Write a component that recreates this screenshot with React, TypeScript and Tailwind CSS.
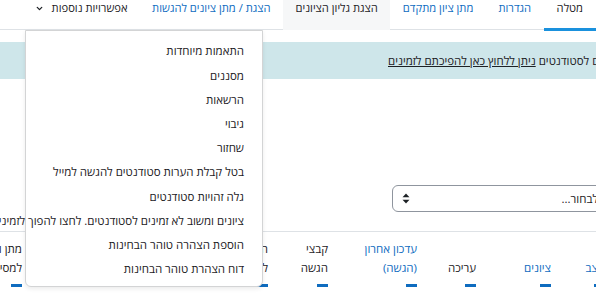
import React from "react";
import { ChevronDown } from "lucide-react";

const tabs = [
  { label: "מטלה", active: true, link: false },
  { label: "הגדרות", link: true },
  { label: "מתן ציון מתקדם", link: true },
  { label: "הצגת גליון הציונים", link: false, shaded: true },
  { label: "הצגת / מתן ציונים להגשות", link: true },
];

const menuItems = [
  "התאמות מיוחדות",
  "מסננים",
  "הרשאות",
  "גיבוי",
  "שחזור",
  "בטל קבלת הערות סטודנטים להגשה למייל",
  "גלה זהויות סטודנטים",
  "ציונים ומשוב לא זמינים לסטודנטים. לחצו להפוך לזמינים",
  "הוספת הצהרה טוהר הבחינות",
  "דוח הצהרת טוהר הבחינות",
];

const columns = [
  { w: 54, top: "", bottom: "מצב", link: true },
  { w: 75, top: "", bottom: "ציונים", link: true },
  { w: 59, top: "", bottom: "עריכה", link: false },
  { w: 89, top: "עדכון אחרון", bottom: "(הגשה)", link: true },
  { w: 60, top: "קבצי", bottom: "הגשה", link: false },
  { w: 98, top: "הערות", bottom: "להגשה", link: false },
  { w: 78, top: "עדכון אחרון", bottom: "(ציון)", link: true },
  { w: 70, top: "משוב", bottom: "", link: false },
  { w: 90, top: "מתן ומשוב", bottom: "למסירה", link: false },
];

export default function App() {
  return (
    <div
      dir="rtl"
      className="relative w-[596px] h-[294px] overflow-hidden bg-white text-[11.5px] text-[#1d2125] font-['Open_Sans',Arial,sans-serif]"
    >
      {/* Tabs */}
      <div className="flex h-[30px] border-b border-[#dee2e6] text-[11.2px]">
        {tabs.map((t) => (
          <div
            key={t.label}
            className={`px-[12.5px] h-[30px] leading-[16px] whitespace-nowrap ${
              t.active ? "border-b-[3px] border-[#1a91dd] h-[31px] px-[13px]" : ""
            } ${t.shaded ? "bg-[#f6f7f8]" : ""} ${t.link ? "text-[#0f6cbf]" : ""}`}
          >
            {t.label}
          </div>
        ))}
        <div className="px-[12px] leading-[16px] whitespace-nowrap flex items-start gap-[8px]">
          <span>אפשרויות נוספות</span>
          <ChevronDown className="w-[9px] h-[9px] mt-[4px]" strokeWidth={3.5} />
        </div>
      </div>

      {/* Alert */}
      <div className="mt-[12px] h-[37px] bg-[#cee6ea] flex items-center whitespace-nowrap">
        <div className="-mr-[24px]">
          <span>זמינים לסטודנטים </span>
          <a className="underline">ניתן ללחוץ כאן להפיכתם לזמינים</a>
        </div>
      </div>

      {/* Select */}
      <div className="mt-[106px] flex">
        <div className="-mr-[16px] w-[220px] h-[27px] border border-[#8f959e] rounded-[6px] flex items-center justify-between pr-[13px] pl-[9px]">
          <span>לבחור...</span>
          <svg width="8" height="11" viewBox="0 0 8 11" className="text-[#1d2125]">
            <path d="M4 0.5 L7.5 4.3 H0.5 Z" fill="currentColor" />
            <path d="M4 10.5 L7.5 6.7 H0.5 Z" fill="currentColor" />
          </svg>
        </div>
      </div>

      {/* Table header */}
      <div className="mt-[19px] border-t border-[#dee2e6] flex -mr-[9px]">
        {columns.map((c, i) => (
          <div
            key={i}
            style={{ width: c.w }}
            className="shrink-0 flex flex-col items-start pt-[7px] whitespace-nowrap"
          >
            <div className={`leading-[19px] h-[19px] ${c.link ? "text-[#0f6cbf]" : ""}`}>{c.top}</div>
            <div className={`leading-[19px] h-[19px] ${c.link ? "text-[#0f6cbf]" : ""}`}>{c.bottom}</div>
            <div className="mt-[7px] w-[11px] h-[3px] bg-[#0f6cbf]" />
          </div>
        ))}
      </div>

      {/* Dropdown menu */}
      <div className="absolute left-[25px] top-[30px] w-[238px] h-[257px] bg-white border border-[#d3d4d5] rounded-b-[6px] shadow-[0_2px_4px_rgba(0,0,0,0.08)] pt-[8px]">
        {menuItems.map((m) => (
          <div key={m} className="h-[24.2px] flex items-center pr-[18px] whitespace-nowrap">
            {m}
          </div>
        ))}
      </div>
    </div>
  );
}
